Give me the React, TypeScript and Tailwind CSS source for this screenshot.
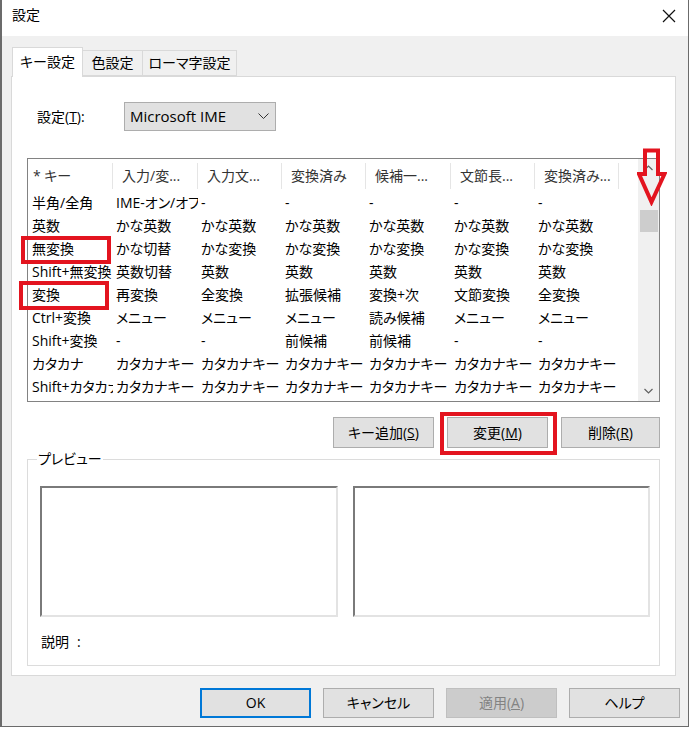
import React from "react";

const headers = ["* キー", "入力/変...", "入力文...", "変換済み", "候補一...", "文節長...", "変換済み..."];
const widths = ["w-[85px]", "w-[85px]", "w-[84px]", "w-[84px]", "w-[85px]", "w-[84px]", "w-[84px]"];
const K = "カタカナキー";
const rows: string[][] = [
  ["半角/全角", "IME-オン/オフ", "-", "-", "-", "-", "-"],
  ["英数", "かな英数", "かな英数", "かな英数", "かな英数", "かな英数", "かな英数"],
  ["無変換", "かな切替", "かな変換", "かな変換", "かな変換", "かな変換", "かな変換"],
  ["Shift+無変換", "英数切替", "英数", "英数", "英数", "英数", "英数"],
  ["変換", "再変換", "全変換", "拡張候補", "変換+次", "文節変換", "全変換"],
  ["Ctrl+変換", "メニュー", "メニュー", "メニュー", "読み候補", "メニュー", "メニュー"],
  ["Shift+変換", "-", "-", "前候補", "前候補", "-", "-"],
  ["カタカナ", K, K, K, K, K, K],
  ["Shift+カタカナ", K, K, K, K, K, K],
];

function Btn({ children, w = "w-[101px]", h = "h-[31px]" }: { children: React.ReactNode; w?: string; h?: string }) {
  return (
    <div className={`${w} ${h} bg-[#e1e1e1] border border-[#adadad] flex items-center justify-center leading-none`}>
      {children}
    </div>
  );
}

export default function App() {
  return (
    <div className="w-[690px] h-[733px] bg-white overflow-hidden font-['Open_Sans','Noto_Sans_CJK_JP',sans-serif] [font-feature-settings:'palt'] text-[14px] text-black">
      <div className="w-[689px] h-[727px] border-l-2 border-r border-b border-[#6b6b6b] flex flex-col">
        {/* title bar */}
        <div className="h-[36px] bg-white flex items-center justify-between pl-[10px] pr-[12px] shrink-0">
          <span className="leading-none -mt-[6px] text-[14px]">設定</span>
          <svg width="14" height="14" viewBox="0 0 14 14" className="-mt-[5px]">
            <path d="M1 1 L13 13 M13 1 L1 13" stroke="#111" strokeWidth="1.2" fill="none" />
          </svg>
        </div>
        {/* body */}
        <div className="flex-1 bg-[#f0f0f0] flex flex-col">
          <div className="pl-[9px] pr-[12px] pt-[11px]">
            {/* tabs */}
            <div className="flex items-end h-[29px]">
              <div className="relative z-10 ml-[1px] w-[71px] h-[30px] -mb-px bg-white border border-b-0 border-[#d9d9d9] flex items-center justify-center leading-none pb-[2px]">
                キー設定
              </div>
              <div className="-ml-px w-[61px] h-[26px] bg-[#f0f0f0] border border-[#d9d9d9] flex items-center justify-center leading-none">
                色設定
              </div>
              <div className="-ml-px w-[95px] h-[26px] bg-[#f0f0f0] border border-[#d9d9d9] flex items-center justify-center leading-none">
                ローマ字設定
              </div>
            </div>
            {/* panel */}
            <div className="h-[600px] bg-white border border-[#d9d9d9] px-[15px] flex flex-col">
              <div className="mt-[25px] flex items-center h-[29px]">
                <span className="ml-[10px] w-[87px] leading-none">
                  設定(<span className="underline">T</span>):
                </span>
                <div className="w-[152px] h-[29px] bg-[#e1e1e1] border border-[#adadad] flex items-center justify-between pl-[5px] pr-[6px] leading-none">
                  <span className="text-[15px]">Microsoft IME</span>
                  <svg width="11" height="7" viewBox="0 0 11 7">
                    <polyline points="0.5,0.5 5.5,5.5 10.5,0.5" stroke="#333" strokeWidth="1" fill="none" />
                  </svg>
                </div>
              </div>

              {/* list view */}
              <div className="relative mt-[27px] h-[244px] border border-[#828282] flex">
                <div className="flex-1 flex flex-col overflow-hidden">
                  <div className="h-[32px] flex shrink-0 text-[#333]">
                    {headers.map((h, i) => (
                      <div
                        key={i}
                        className={`${widths[i]} shrink-0 h-[26px] mt-[4px] border-r border-[#e5e5e5] flex items-center leading-none whitespace-nowrap overflow-hidden ${i === 0 ? "pl-[5px]" : "pl-[9px]"}`}
                      >
                        {h}
                      </div>
                    ))}
                  </div>
                  {rows.map((r, ri) => (
                    <div key={ri} className="h-[23px] flex shrink-0">
                      {r.map((c, ci) => (
                        <div
                          key={ci}
                          className={`${widths[ci]} shrink-0 flex items-center leading-none whitespace-nowrap overflow-hidden ${ci === 0 ? "pl-[4px]" : "pl-[3px]"}`}
                        >
                          {c}
                        </div>
                      ))}
                    </div>
                  ))}
                </div>
                {/* scrollbar */}
                <div className="w-[21px] bg-[#f0f0f0] flex flex-col items-center shrink-0">
                  <div className="h-[17px] w-full flex items-center justify-center">
                    <svg width="9" height="6" viewBox="0 0 9 6">
                      <polyline points="0.5,5 4.5,1 8.5,5" stroke="#606060" strokeWidth="1.2" fill="none" />
                    </svg>
                  </div>
                  <div className="h-[34px]" />
                  <div className="h-[22px] w-[18px] bg-[#cdcdcd]" />
                  <div className="flex-1" />
                  <div className="h-[20px] w-full flex items-center justify-center">
                    <svg width="9" height="6" viewBox="0 0 9 6">
                      <polyline points="0.5,1 4.5,5 8.5,1" stroke="#606060" strokeWidth="1.2" fill="none" />
                    </svg>
                  </div>
                </div>
                {/* annotations */}
                <div className="absolute left-[-7px] top-[77px] w-[90px] h-[28px] border-[4px] border-[#e3141f]" />
                <div className="absolute left-[-9px] top-[122px] w-[90px] h-[29px] border-[4px] border-[#e3141f]" />
                <svg className="absolute left-[609px] top-[-11px]" width="30" height="58" viewBox="0 0 30 58">
                  <polygon points="8,2.5 21,2.5 21,26 27.5,26 14.5,54 2,26 8,26" stroke="#e3141f" strokeWidth="4" fill="none" strokeLinejoin="miter" />
                </svg>
              </div>

              {/* action buttons */}
              <div className="mt-[15px] flex justify-end gap-[13px]">
                <Btn>
                  キー追加(<span className="underline">S</span>)
                </Btn>
                <div className="relative">
                  <Btn>
                    変更(<span className="underline">M</span>)
                  </Btn>
                  <div className="absolute left-[-7px] right-[-9px] top-[-5px] bottom-[-7px] border-[4px] border-[#e3141f]" />
                </div>
                <Btn w="w-[99px]">
                  削除(<span className="underline">R</span>)
                </Btn>
              </div>

              {/* preview group */}
              <fieldset className="mt-[1px] border border-[#dcdcdc] pl-[12px] pr-[9px] pb-[13px]">
                <legend className="ml-[-3px] px-[1px] leading-[20px]">プレビュー</legend>
                <div className="mt-[17px] flex gap-[15px]">
                  <div className="flex-1 h-[131px] bg-white border-2 border-t-[#7a7a7a] border-l-[#7a7a7a] border-r-[#e3e3e3] border-b-[#e3e3e3]" />
                  <div className="flex-1 h-[131px] bg-white border-2 border-t-[#7a7a7a] border-l-[#7a7a7a] border-r-[#e3e3e3] border-b-[#e3e3e3]" />
                </div>
                <div className="mt-[15px] leading-[20px] pl-[1px] flex">
                  <span>説明</span>
                  <span className="ml-[8px]">:</span>
                </div>
              </fieldset>
            </div>
          </div>

          {/* dialog buttons */}
          <div className="mt-[12px] flex justify-end gap-[12px] pr-[8px]">
            <div className="w-[111px] h-[30px] bg-[#e1e1e1] border-2 border-[#0078d7] flex items-center justify-center leading-none">OK</div>
            <Btn w="w-[111px]" h="h-[30px]">キャンセル</Btn>
            <div className="w-[111px] h-[30px] bg-[#cccccc] border border-[#bfbfbf] text-[#838383] flex items-center justify-center leading-none">
              適用(<span className="underline">A</span>)
            </div>
            <Btn w="w-[111px]" h="h-[30px]">ヘルプ</Btn>
          </div>
        </div>
      </div>
    </div>
  );
}
